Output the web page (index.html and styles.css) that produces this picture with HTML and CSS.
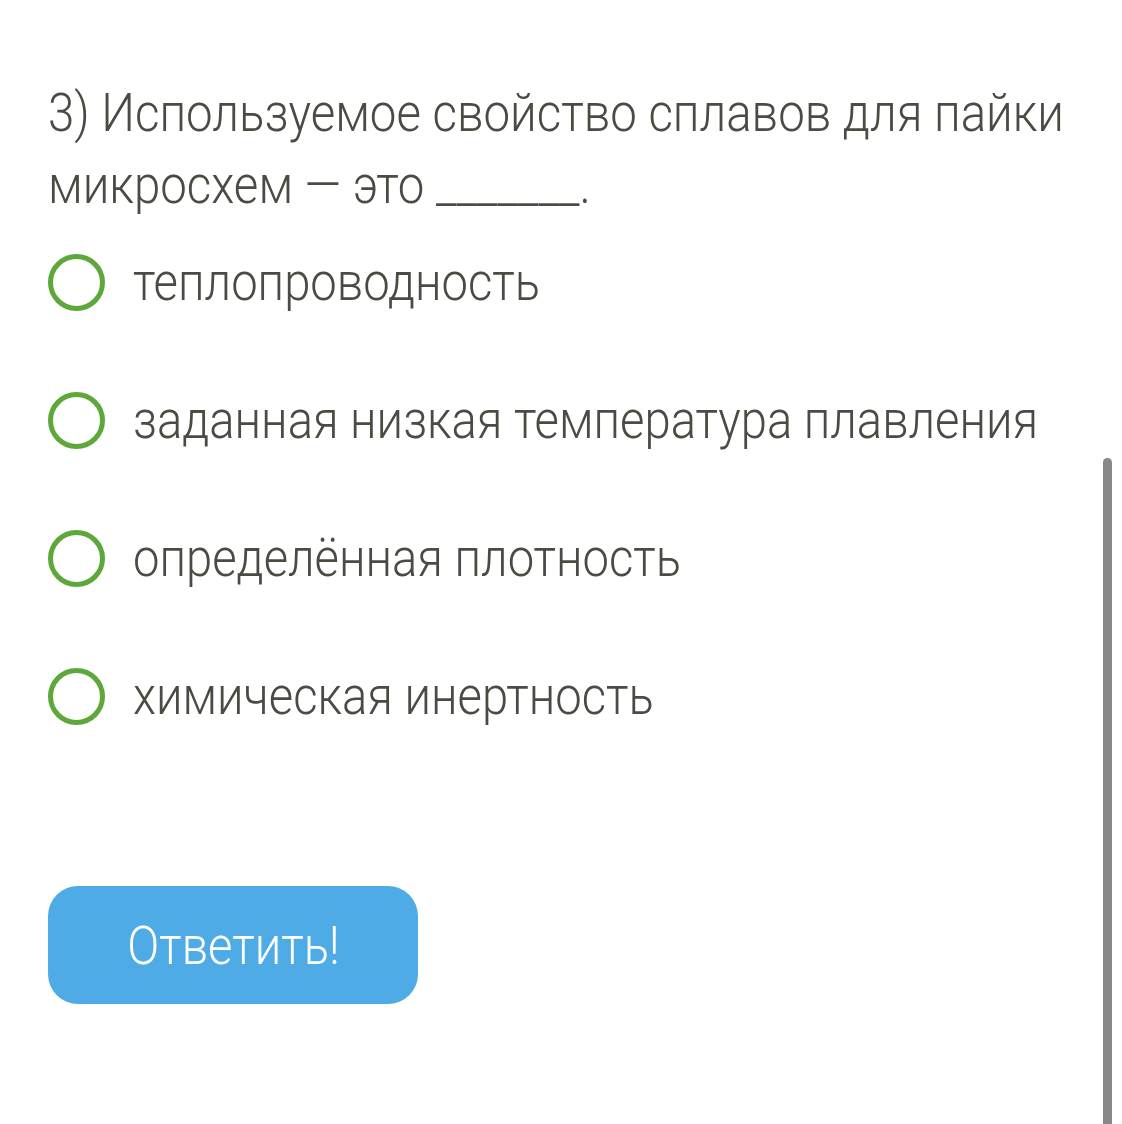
FILE: index.html
```html
<!DOCTYPE html>
<html lang="ru">
<head>
<meta charset="utf-8">
<link rel="stylesheet" href="styles.css">
</head>
<body>
<main class="page">
  <p class="question"><span class="narrow question-text">3) Используемое свойство сплавов для пайки<br>микросхем — это _______.</span></p>
  <ul class="options">
    <li class="option"><span class="radio"></span><span class="label narrow">теплопроводность</span></li>
    <li class="option"><span class="radio"></span><span class="label narrow">заданная низкая температура плавления</span></li>
    <li class="option"><span class="radio"></span><span class="label narrow">определённая плотность</span></li>
    <li class="option"><span class="radio"></span><span class="label narrow">химическая инертность</span></li>
  </ul>
  <button class="submit"><span class="narrow submit-text">Ответить!</span></button>
</main>
<div class="scrollbar"></div>
</body>
</html>
```
FILE: styles.css
```css
html, body {
  margin: 0;
  padding: 0;
  background: #ffffff;
  height: 100%;
  overflow: hidden;
}
body {
  font-family: Roboto, "Noto Sans", sans-serif;
  font-weight: 300;
  color: #4b4b43;
}
.page {
  padding: 77px 40px 0 48px;
}
.narrow {
  display: inline-block;
  transform: scaleX(0.874);
  transform-origin: left top;
  white-space: nowrap;
}
.question {
  margin: 0;
  font-size: 54px;
  line-height: 72px;
  height: 144px;
}
.question-text {
  width: 100%;
  transform: scaleX(0.878);
}
.options {
  list-style: none;
  margin: 32px 0 0 0;
  padding: 0;
  display: flex;
  flex-direction: column;
  gap: 80px;
}
.option {
  display: flex;
  align-items: center;
  gap: 28px;
  height: 58px;
}
.radio {
  flex: none;
  width: 47px;
  height: 47px;
  border: 5.5px solid #5ea83b;
  border-radius: 50%;
  box-sizing: content-box;
}
.label {
  flex: 0 1 auto;
  min-width: 0;
  font-size: 54px;
  line-height: 58px;
}
.submit {
  display: flex;
  align-items: center;
  justify-content: center;
  margin-top: 161px;
  width: 370px;
  height: 118px;
  border: none;
  border-radius: 30px;
  background: #4eabe6;
  color: #ffffff;
  font-family: Roboto, "Noto Sans", sans-serif;
  font-weight: 300;
  font-size: 54px;
  padding: 0;
}
.submit-text {
  transform-origin: center center;
}
.scrollbar {
  position: absolute;
  left: 1103px;
  top: 458px;
  width: 9px;
  height: 666px;
  background: #878787;
  border-radius: 5px 5px 0 0;
}
```
